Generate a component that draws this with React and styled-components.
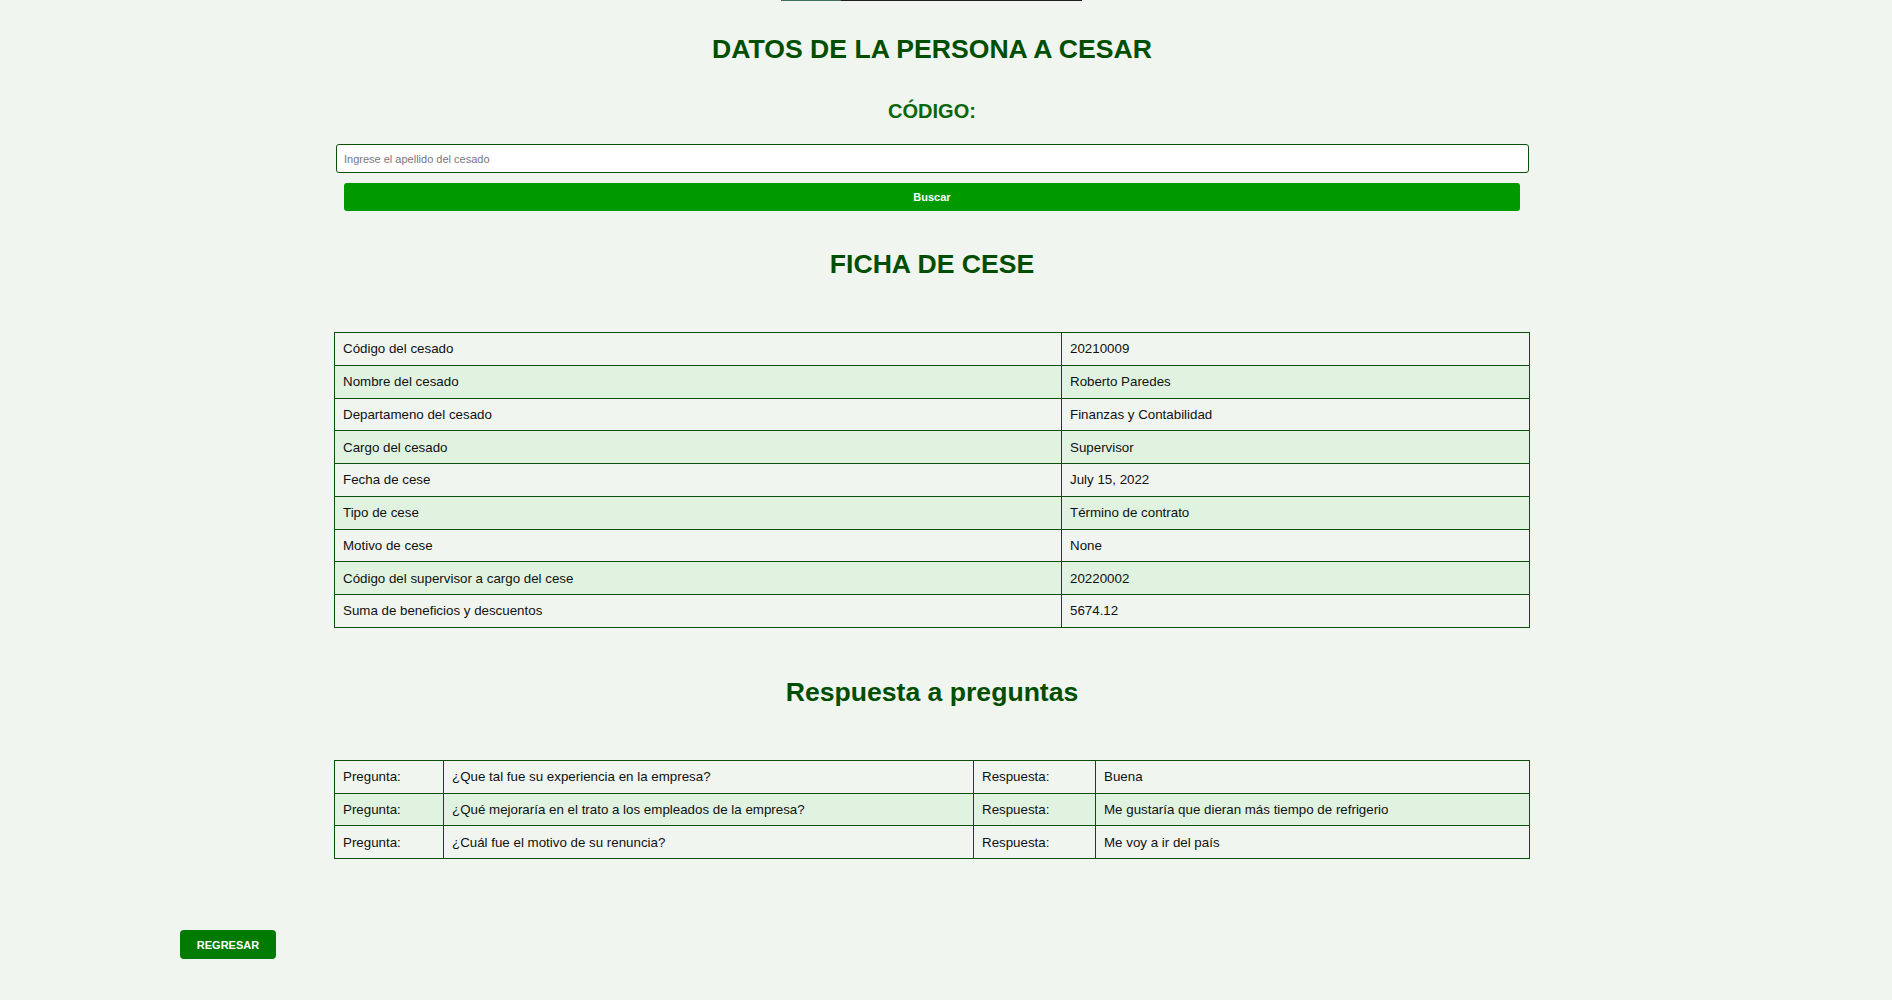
import React from 'react';
import styled, { createGlobalStyle } from 'styled-components';

const GlobalStyle = createGlobalStyle`
  html, body {
    margin: 0;
    padding: 0;
    background: #f0f5f0;
    font-family: "Liberation Sans", Arial, sans-serif;
  }
`;

const Page = styled.div`
  min-height: 1000px;
  display: flex;
  flex-direction: column;
`;

const TopBar = styled.div`
  display: flex;
  height: 1px;
  margin-left: 781px;
  width: 301px;
`;

const BarPart = styled.div`
  width: ${(p) => p.w}px;
  background: ${(p) => p.color};
`;

const Main = styled.main`
  width: 1196px;
  margin-left: 334px;
  display: flex;
  flex-direction: column;
`;

const Title = styled.h1`
  margin: ${(p) => p.top}px 0 0;
  font-size: 26.6px;
  line-height: 30px;
  font-weight: 700;
  color: #004e00;
  text-align: center;
`;

const Label = styled.h2`
  margin: 36px 0 0;
  font-size: 20px;
  line-height: 23px;
  font-weight: 700;
  color: #0a660a;
  text-align: center;
`;

const SearchInput = styled.input`
  box-sizing: border-box;
  margin: 21px 1px 0 2px;
  height: 29px;
  width: 1193px;
  padding: 0 7px;
  border: 1px solid #0b4f0b;
  border-radius: 3px;
  background: #ffffff;
  font-family: "Liberation Sans", Arial, sans-serif;
  font-size: 11px;
  color: #222;
  &::placeholder {
    color: #777;
  }
`;

const SearchButton = styled.button`
  margin: 10px 10px 0;
  height: 28px;
  border: none;
  border-radius: 3px;
  background: #009900;
  color: #fff;
  font-family: "Liberation Sans", Arial, sans-serif;
  font-size: 11px;
  font-weight: 700;
  cursor: pointer;
`;

const Table = styled.table`
  margin-top: ${(p) => p.top}px;
  width: 100%;
  border-collapse: collapse;
  font-size: 13.33px;
  color: #111;
`;

const Row = styled.tr`
  height: 32.75px;
  background: ${(p) => (p.even ? '#e0f2e0' : '#f0f5f0')};
`;

const Cell = styled.td`
  border: 1px solid #0b4f0b;
  padding: 0 8px;
  vertical-align: middle;
  width: ${(p) => (p.w ? `${p.w}px` : 'auto')};
  box-sizing: border-box;
`;

const Footer = styled.div`
  margin-top: 71px;
  padding-left: 180px;
`;

const BackButton = styled.button`
  width: 96px;
  height: 29px;
  border: none;
  border-radius: 4px;
  background: #007a00;
  color: #fff;
  font-family: "Liberation Sans", Arial, sans-serif;
  font-size: 11px;
  font-weight: 700;
  cursor: pointer;
`;

const ficha = [
  ['Código del cesado', '20210009'],
  ['Nombre del cesado', 'Roberto Paredes'],
  ['Departameno del cesado', 'Finanzas y Contabilidad'],
  ['Cargo del cesado', 'Supervisor'],
  ['Fecha de cese', 'July 15, 2022'],
  ['Tipo de cese', 'Término de contrato'],
  ['Motivo de cese', 'None'],
  ['Código del supervisor a cargo del cese', '20220002'],
  ['Suma de beneficios y descuentos', '5674.12'],
];

const respuestas = [
  ['¿Que tal fue su experiencia en la empresa?', 'Buena'],
  ['¿Qué mejoraría en el trato a los empleados de la empresa?', 'Me gustaría que dieran más tiempo de refrigerio'],
  ['¿Cuál fue el motivo de su renuncia?', 'Me voy a ir del país'],
];

export default function App() {
  return (
    <Page>
      <GlobalStyle />
      <TopBar>
        <BarPart w={60} color="#3f6e5e" />
        <BarPart w={241} color="#1e1e1e" />
      </TopBar>
      <Main>
        <Title top={33}>DATOS DE LA PERSONA A CESAR</Title>
        <Label>CÓDIGO:</Label>
        <SearchInput placeholder="Ingrese el apellido del cesado" />
        <SearchButton>Buscar</SearchButton>
        <Title top={38}>FICHA DE CESE</Title>
        <Table top={53}>
          <tbody>
            {ficha.map(([k, v], i) => (
              <Row key={k} even={i % 2 === 1}>
                <Cell w={727}>{k}</Cell>
                <Cell>{v}</Cell>
              </Row>
            ))}
          </tbody>
        </Table>
        <Title top={49}>Respuesta a preguntas</Title>
        <Table top={53}>
          <tbody>
            {respuestas.map(([q, a], i) => (
              <Row key={q} even={i % 2 === 1}>
                <Cell w={109}>Pregunta:</Cell>
                <Cell w={530}>{q}</Cell>
                <Cell w={122}>Respuesta:</Cell>
                <Cell>{a}</Cell>
              </Row>
            ))}
          </tbody>
        </Table>
      </Main>
      <Footer>
        <BackButton>REGRESAR</BackButton>
      </Footer>
    </Page>
  );
}
